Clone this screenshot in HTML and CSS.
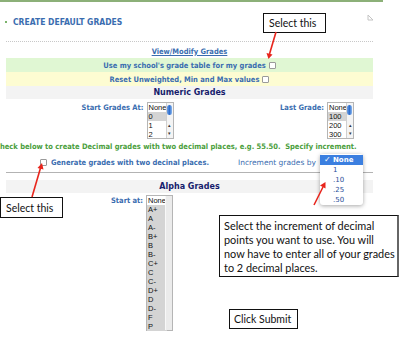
FILE: index.html
```html
<!DOCTYPE html>
<html lang="en">
  <head>
    <meta charset="UTF-8">
    <title>Create Default Grades</title>
    <link rel="stylesheet" href="styles.css">
  </head>
  <body>
    <div class="topbar"></div>
    <h1 class="title"><span class="bullet"></span>CREATE DEFAULT GRADES</h1>
    <div class="panel">
      <div class="linkrow"><a class="link">View/Modify Grades</a></div>
      <div class="row green">Use my school's grade table for my grades <span class="box"></span></div>
      <div class="row yellow">Reset Unweighted, Min and Max values <span class="box"></span></div>
      <div class="row gray heading">Numeric Grades</div>
      <div class="pickers">
        <div class="picker left">
          <span class="label">Start Grades At:</span>
          <div class="listbox">
            <div class="item">None</div>
            <div class="item sel">0</div>
            <div class="item">1</div>
            <div class="item">2</div>
            <div class="scroll"><span class="thumb"></span><span class="arrows">&#9652;<br>&#9662;</span></div>
          </div>
        </div>
        <div class="picker right">
          <span class="label">Last Grade:</span>
          <div class="listbox">
            <div class="item">None</div>
            <div class="item sel">100</div>
            <div class="item">200</div>
            <div class="item">300</div>
            <div class="scroll"><span class="thumb"></span><span class="arrows">&#9652;<br>&#9662;</span></div>
          </div>
        </div>
      </div>
      <div class="note">Check below to create Decimal grades with two decimal places, e.g. 55.50.&nbsp; Specify increment.</div>
      <div class="decimal">
        <span class="box"></span>
        <span class="label">Generate grades with two decinal places.</span>
        <span class="label inc">Increment grades by</span>
      </div>
      <div class="row gray heading alpha">Alpha Grades</div>
      <div class="picker alphapick">
        <span class="label">Start at:</span>
        <div class="listbox tall">
          <div class="item">None</div>
          <div class="item sel">A+</div>
          <div class="item sel">A</div>
          <div class="item sel">A-</div>
          <div class="item sel">B+</div>
          <div class="item sel">B</div>
          <div class="item sel">B-</div>
          <div class="item sel">C+</div>
          <div class="item sel">C</div>
          <div class="item sel">C-</div>
          <div class="item sel">D+</div>
          <div class="item sel">D</div>
          <div class="item sel">D-</div>
          <div class="item sel">F</div>
          <div class="item sel">P</div>
          <div class="track"></div>
        </div>
      </div>
    </div>

    <div class="menu">
      <div class="opt on"><span class="tick">&#10003;</span>None</div>
      <div class="opt">1</div>
      <div class="opt">.10</div>
      <div class="opt">.25</div>
      <div class="opt">.50</div>
    </div>

    <svg class="corner" width="7" height="7" viewBox="0 0 7 7">
      <path d="M1 1 L6 6 L1 6 Z" fill="none" stroke="#c4c4c4" stroke-width="1"/>
    </svg>

    <div class="callout c1">Select this</div>
    <div class="callout c2">Select this</div>
    <div class="callout c3">Select the increment of decimal<br>points you want to use. You will<br>now have to enter all of your grades<br>to 2 decimal places.</div>
    <div class="callout c4">Click Submit</div>

    <svg class="arrows-layer" width="400" height="344" viewBox="0 0 400 344">
      <g stroke="#e8251c" stroke-width="1.6" fill="#e8251c">
        <line x1="276" y1="32" x2="269.5" y2="54"/>
        <path d="M266.5 53 L272.5 54.5 L268.5 59 Z" stroke="none"/>
        <line x1="32" y1="197" x2="40.5" y2="168"/>
        <path d="M37.5 168 L43.5 169.5 L42 163 Z" stroke="none"/>
        <line x1="314" y1="205" x2="323" y2="187"/>
        <path d="M320 185.5 L325.5 188.5 L325.5 182 Z" stroke="none"/>
      </g>
    </svg>
  </body>
</html>
```

FILE: styles.css
```css
body {
  margin: 0;
  width: 400px;
  height: 344px;
  overflow: hidden;
  position: relative;
  background-color: white;
  font-family: "DejaVu Sans Condensed", "DejaVu Sans", sans-serif;
  font-weight: bold;
  font-size: 7.5px;
  color: #3a6db0;
}
.topbar {
  width: 383px;
  height: 2px;
  background-color: #8cb078;
}
.title {
  margin: 0;
  height: 39px;
  display: flex;
  align-items: center;
  font-size: 8.5px;
  color: #3a6db0;
}
.bullet {
  width: 2px;
  height: 2px;
  margin-left: 5px;
  margin-right: 6px;
  background-color: #7ab36a;
}
.panel {
  margin-left: 6px;
  width: 367px;
  border-top: 1px dotted #c8c8c8;
}
.linkrow {
  height: 16px;
  display: flex;
  align-items: flex-end;
  justify-content: center;
}
.link {
  line-height: 12px;
  text-decoration: underline;
  color: #3a6db0;
}
.row {
  height: 14px;
  display: flex;
  align-items: center;
  justify-content: center;
  gap: 3px;
  white-space: nowrap;
}
.green { background-color: #e0f7d3; }
.yellow { background-color: #fdfcd2; }
.gray { background-color: #f3f3f3; }
.heading {
  height: 13px;
  font-family: "DejaVu Sans", sans-serif;
  font-size: 8px;
  color: #161c6c;
}
.box {
  display: inline-block;
  width: 5px;
  height: 5px;
  border: 1px solid #9a9a9a;
  border-radius: 1px;
  background-color: white;
}
.pickers {
  display: grid;
  grid-template-columns: 1fr 1fr;
  height: 42px;
  padding-top: 3px;
  box-sizing: border-box;
}
.picker {
  display: flex;
  align-items: flex-start;
  justify-content: flex-end;
  gap: 3px;
}
.picker.left { padding-right: 16px; }
.picker.right { padding-right: 19px; }
.label {
  line-height: 10px;
  padding-top: 1px;
}
.listbox {
  position: relative;
  width: 27px;
  height: 37px;
  box-sizing: border-box;
  border: 1px solid #b5b5b5;
  background-color: white;
  font-family: "Liberation Sans", sans-serif;
  font-weight: normal;
  font-size: 7.5px;
  color: #111;
}
.item {
  height: 9px;
  line-height: 9px;
  padding-left: 1px;
}
.item.sel { background-color: #d4d4d4; }
.scroll {
  position: absolute;
  top: 0;
  right: 0;
  width: 6px;
  height: 100%;
  border-left: 1px solid #d0d0d0;
  background-color: #f4f4f4;
}
.thumb {
  position: absolute;
  top: 2px;
  left: 0;
  width: 5px;
  height: 10px;
  border-radius: 3px;
  background: linear-gradient(to right, #6f9fe0, #2f6fd0, #8ab6ec);
}
.arrows {
  position: absolute;
  bottom: 1px;
  left: 0;
  width: 6px;
  text-align: center;
  font-size: 5px;
  line-height: 8px;
  color: #333;
}
.note {
  height: 12px;
  line-height: 12px;
  margin-left: -11px;
  white-space: nowrap;
  color: #4a9e3c;
}
.decimal {
  height: 20px;
  display: flex;
  align-items: center;
  padding-left: 34px;
  border-bottom: 1px solid #b3b3b3;
  box-sizing: border-box;
}
.decimal .box { margin-right: 4px; }
.decimal .label { padding-top: 0; }
.decimal .inc {
  margin-left: 29px;
  font-weight: normal;
  font-family: "DejaVu Sans", sans-serif;
}
.alpha { margin-top: 7px; }
.alphapick {
  justify-content: flex-start;
  padding-left: 105px;
  padding-top: 2px;
}
.listbox.tall {
  height: 136px;
  background-color: #d6d6d6;
}
.listbox.tall .item:first-child { background-color: white; }
.listbox.tall .item { width: 19px; }
.track {
  position: absolute;
  top: 0;
  right: 0;
  width: 6px;
  height: 100%;
  background-color: #ebebeb;
  border-left: 1px solid #f8f8f8;
}
.menu {
  position: absolute;
  left: 320px;
  top: 154px;
  width: 43px;
  height: 51px;
  padding-top: 1px;
  box-sizing: border-box;
  border-radius: 3px;
  background-color: white;
  box-shadow: 0 1px 4px rgba(0, 0, 0, 0.35);
  font-family: "DejaVu Sans", sans-serif;
  font-weight: normal;
  font-size: 7px;
  color: #2b4f9a;
}
.opt {
  height: 10px;
  line-height: 10px;
  padding-left: 13px;
}
.opt.on {
  position: relative;
  background-color: #3b7fe0;
  color: white;
  font-weight: bold;
}
.tick {
  position: absolute;
  left: 4px;
  font-size: 8px;
}
.corner {
  position: absolute;
  left: 367px;
  top: 14px;
}
.callout {
  position: absolute;
  box-sizing: border-box;
  border: 1px solid #111;
  background-color: white;
  font-family: "Lato", "Open Sans", sans-serif;
  font-weight: normal;
  font-size: 10.5px;
  line-height: 14px;
  color: #111;
  white-space: nowrap;
}
.c1 {
  left: 263px;
  top: 13px;
  width: 63px;
  height: 20px;
  padding: 2px 0 0 5px;
}
.c2 {
  left: 0;
  top: 197px;
  width: 63px;
  height: 21px;
  padding: 3px 0 0 5px;
}
.c3 {
  left: 219px;
  top: 215px;
  width: 180px;
  height: 62px;
  padding: 3px 4px 0 4px;
  border-right: 2px solid #666;
  font-size: 10.9px;
}
.c4 {
  left: 229px;
  top: 309px;
  width: 69px;
  height: 20px;
  padding: 2px 0 0 4px;
}
.arrows-layer {
  position: absolute;
  left: 0;
  top: 0;
  pointer-events: none;
}
```
